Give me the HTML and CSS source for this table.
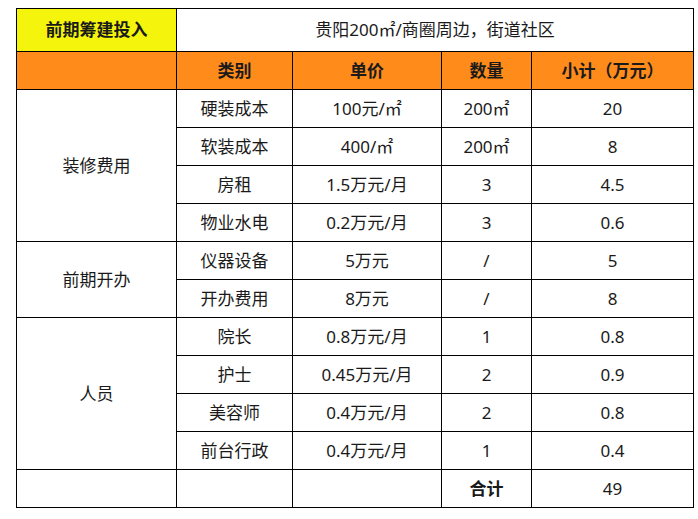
FILE: index.html
```html
<!DOCTYPE html>
<html lang="zh-CN">
<head>
<meta charset="utf-8">
<title>前期筹建投入</title>
<link rel="stylesheet" href="styles.css">
</head>
<body>
<table class="budget">
  <colgroup>
    <col class="c1"><col class="c2"><col class="c3"><col class="c4"><col class="c5">
  </colgroup>
  <tr class="title-row">
    <td class="yellow bold">前期筹建投入</td>
    <td colspan="4">贵阳200㎡/商圈周边，街道社区</td>
  </tr>
  <tr class="head-row">
    <td></td><td>类别</td><td>单价</td><td>数量</td><td>小计（万元）</td>
  </tr>
  <tr><td rowspan="4">装修费用</td><td>硬装成本</td><td>100元/㎡</td><td>200㎡</td><td>20</td></tr>
  <tr><td>软装成本</td><td>400/㎡</td><td>200㎡</td><td>8</td></tr>
  <tr><td>房租</td><td>1.5万元/月</td><td>3</td><td>4.5</td></tr>
  <tr><td>物业水电</td><td>0.2万元/月</td><td>3</td><td>0.6</td></tr>
  <tr><td rowspan="2">前期开办</td><td>仪器设备</td><td>5万元</td><td>/</td><td>5</td></tr>
  <tr><td>开办费用</td><td>8万元</td><td>/</td><td>8</td></tr>
  <tr><td rowspan="4">人员</td><td>院长</td><td>0.8万元/月</td><td>1</td><td>0.8</td></tr>
  <tr><td>护士</td><td>0.45万元/月</td><td>2</td><td>0.9</td></tr>
  <tr><td>美容师</td><td>0.4万元/月</td><td>2</td><td>0.8</td></tr>
  <tr><td>前台行政</td><td>0.4万元/月</td><td>1</td><td>0.4</td></tr>
  <tr><td></td><td></td><td></td><td class="bold">合计</td><td>49</td></tr>
</table>
</body>
</html>
```

FILE: styles.css
```css
html, body {
  background: #fff;
}
body {
  margin: 8px 0 0 16px;
  font-family: "Noto Sans", "Noto Sans CJK SC", sans-serif;
  font-size: 17px;
  color: #1a1a1a;
}
.budget {
  border-collapse: collapse;
  table-layout: fixed;
  width: 677px;
}
.c1 { width: 160px; }
.c2 { width: 116px; }
.c3 { width: 149px; }
.c4 { width: 90px; }
.c5 { width: 162px; }
.budget td {
  border: 1px solid #000;
  padding: 0;
  height: 37px;
  text-align: center;
  vertical-align: middle;
  line-height: 20px;
}
.budget .title-row td {
  height: 42px;
}
.yellow {
  background: #f4f40c;
}
.head-row td {
  background: #fe8b1a;
  font-weight: bold;
}
.bold {
  font-weight: bold;
}
```
